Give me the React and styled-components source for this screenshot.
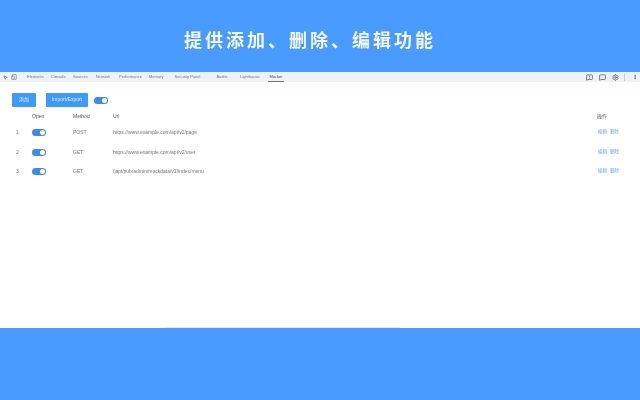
import React from 'react'
import styled, { createGlobalStyle } from 'styled-components'
import { MousePointer2, TabletSmartphone, MessageSquare, MessageSquareWarning, Settings, MoreVertical } from 'lucide-react'

const tabs = [
  ['Elements', 16], ['Console', 14], ['Sources', 14], ['Network', 16], ['Performance', 22],
  ['Memory', 14], ['Security Panel', 33], ['Audits', 20], ['Lighthouse', 20], ['Mocker', 16],
]

const rows = [
  { id: 1, method: 'POST', url: 'https://www.example.com/api/v2/page' },
  { id: 2, method: 'GET', url: 'https://www.example.com/api/v2/user' },
  { id: 3, method: 'GET', url: '/japi/pub/admin/mockdata/v1/index/menu' },
]

export default function App() {
  return (
    <>
      <GlobalStyle />
      <Page>
        <Banner>提供添加、删除、编辑功能</Banner>
        <Shot>
          <TabBar>
            <ToolIcons>
              <MousePointer2 size={5} strokeWidth={2.5} />
              <TabletSmartphone size={6} strokeWidth={2} />
            </ToolIcons>
            {tabs.map(([label, width], i) => (
              <Tab key={label} $width={width} $active={i === tabs.length - 1}>
                {label}
              </Tab>
            ))}
            <RightIcons>
              <MessageSquareWarning size={7} strokeWidth={2.5} />
              <MessageSquare size={7} strokeWidth={2.5} />
              <Settings size={7} strokeWidth={2.5} />
              <Divider />
              <MoreVertical size={6} strokeWidth={2.5} />
            </RightIcons>
          </TabBar>
          <Panel>
            <Toolbar>
              <Button $width={24}>添加</Button>
              <Button $width={42}>Import/Export</Button>
              <Toggle />
            </Toolbar>
            <HeadRow>
              <span />
              <span>Open</span>
              <span>Method</span>
              <span>Url</span>
              <span>操作</span>
            </HeadRow>
            {rows.map(row => (
              <Row key={row.id}>
                <Index>{row.id}</Index>
                <span><Toggle /></span>
                <span>{row.method}</span>
                <span>{row.url}</span>
                <Actions>
                  <a>编辑</a>
                  <a>删除</a>
                </Actions>
              </Row>
            ))}
          </Panel>
          <ScrollEdge />
        </Shot>
        <Footer />
      </Page>
    </>
  )
}

const GlobalStyle = createGlobalStyle`
  html, body {
    margin: 0;
    background: #4a9bff;
  }
  body {
    font-family: "Liberation Sans", "Noto Sans CJK SC", sans-serif;
  }
`

const Page = styled.div`
  width: 640px;
  height: 400px;
  display: flex;
  flex-direction: column;
  overflow: hidden;
`

const Banner = styled.h1`
  height: 72px;
  margin: 0;
  padding: 6px 20px 0 0;
  box-sizing: border-box;
  display: flex;
  align-items: center;
  justify-content: center;
  background: #4a9bff;
  color: #f4f9ff;
  font: 700 18px "Noto Sans CJK SC", sans-serif;
  letter-spacing: 3px;
  filter: blur(0.35px);
`

const Shot = styled.div`
  height: 256px;
  background: #fff;
  display: flex;
  flex-direction: column;
`

const TabBar = styled.div`
  height: 10px;
  flex: none;
  display: flex;
  align-items: center;
  background: #edf3f5;
  color: #666;
  font-size: 4px;
  filter: blur(0.35px);
`

const ToolIcons = styled.div`
  width: 27px;
  padding-left: 3px;
  box-sizing: border-box;
  display: flex;
  align-items: center;
  gap: 3px;
  color: #555;
`

const Tab = styled.span`
  width: ${p => p.$width}px;
  margin-right: 8px;
  height: 10px;
  line-height: 10px;
  white-space: nowrap;
  text-align: center;
  box-sizing: border-box;
  border-bottom: 1px solid ${p => (p.$active ? '#777' : 'transparent')};
  color: ${p => (p.$active ? '#444' : '#777')};
`

const RightIcons = styled.div`
  margin-left: auto;
  padding-right: 2px;
  display: flex;
  align-items: center;
  gap: 6px;
  color: #555;
`

const Divider = styled.i`
  width: 1px;
  height: 7px;
  background: #ccc;
  margin: 0 1px 0 -1px;
`

const Panel = styled.div`
  flex: 1;
  padding: 11px 0 0 12px;
  color: #666;
  font-size: 5px;
`

const Toolbar = styled.div`
  display: flex;
  align-items: center;
  height: 14px;
  gap: 10px;
  margin-bottom: 4px;
  & > :last-child {
    margin-left: -4px;
  }
`

const Button = styled.button`
  width: ${p => p.$width}px;
  height: 14px;
  padding: 0 0 2px;
  border: 0;
  border-radius: 1px;
  background: #3f9bf8;
  color: #dcebff;
  font: 5px/8px "Liberation Sans", "Noto Sans CJK SC", sans-serif;
  filter: blur(0.3px);
`

const Toggle = styled.i`
  display: block;
  position: relative;
  width: 14px;
  height: 7px;
  border-radius: 4px;
  background: #3f8ae6;
  filter: blur(0.2px);
  &::after {
    content: '';
    position: absolute;
    right: 1px;
    top: 1px;
    width: 5px;
    height: 5px;
    border-radius: 50%;
    background: #fff;
  }
`

const HeadRow = styled.div`
  display: grid;
  grid-template-columns: 20px 41px 40px 484px 30px;
  align-items: center;
  height: 10px;
  margin-bottom: 2px;
  color: #555;
  line-height: 7px;
  filter: blur(0.35px);
`

const Row = styled(HeadRow)`
  height: 19.5px;
  margin: 0;
  color: #777;
  filter: blur(0.35px);
`

const Index = styled.span`
  padding-left: 4px;
`

const Actions = styled.span`
  display: flex;
  gap: 3px;
  color: #6f9fe0;
  font-size: 4.5px;
  padding: 0 0 2px 1px;
`

const ScrollEdge = styled.div`
  height: 1px;
  margin: 0 240px 0 165px;
  background: #e9edf2;
`

const Footer = styled.div`
  flex: 1;
  background: #4a9bff;
`
